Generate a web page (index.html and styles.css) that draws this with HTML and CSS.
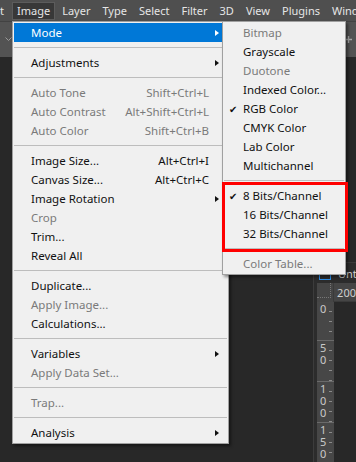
FILE: index.html
```html
<!DOCTYPE html>
<html lang="en">
<head>
<meta charset="UTF-8">
<meta name="viewport" content="width=device-width, initial-scale=1.0">
<title>Image Menu</title>
<link rel="stylesheet" href="styles.css">
</head>
<body>

<div class="app">
    <!-- Menu bar -->
    <div class="menubar">
        <span class="mb-item first">t</span>
        <span class="mb-item active">Image</span>
        <span class="mb-item">Layer</span>
        <span class="mb-item">Type</span>
        <span class="mb-item">Select</span>
        <span class="mb-item">Filter</span>
        <span class="mb-item">3D</span>
        <span class="mb-item">View</span>
        <span class="mb-item">Plugins</span>
        <span class="mb-item">Window</span>
    </div>

    <!-- Options bar -->
    <div class="optbar">
        <svg class="chev" width="7" height="5" viewBox="0 0 7 5"><polyline points="0.5,0.5 3.5,3.5 6.5,0.5" fill="none" stroke="#9a9a9a" stroke-width="1"/></svg>
        <svg class="plus" width="7" height="7" viewBox="0 0 7 7"><path d="M3.5 0v7M0 3.5h7" stroke="#a8a8a8" stroke-width="1.4"/></svg>
    </div>

    <!-- Workspace with document window -->
    <div class="workspace">
        <div class="docwin">
            <div class="doctab">
                <span class="tabicon"></span>
                <span class="tabtext">Untitled</span>
            </div>
            <div class="rulerrow">
                <div class="corner"><div class="corner-dots"></div></div>
                <div class="hruler">200</div>
            </div>
            <div class="docbody">
                <div class="vruler">
                    <div class="seg first"><span>0</span></div>
                    <div class="seg"><span>5</span><span>0</span></div>
                    <div class="seg"><span>1</span><span>0</span><span>0</span></div>
                    <div class="seg"><span>1</span><span>5</span><span>0</span></div>
                </div>
                <div class="canvas"></div>
            </div>
        </div>
    </div>

    <!-- Image menu -->
    <div class="menu main">
        <div class="item hl"><span class="label">Mode</span><span class="arrow"></span></div>
        <div class="sep"></div>
        <div class="item"><span class="label">Adjustments</span><span class="arrow"></span></div>
        <div class="sep"></div>
        <div class="item off"><span class="label">Auto Tone</span><span class="key">Shift+Ctrl+L</span></div>
        <div class="item off"><span class="label">Auto Contrast</span><span class="key">Alt+Shift+Ctrl+L</span></div>
        <div class="item off"><span class="label">Auto Color</span><span class="key">Shift+Ctrl+B</span></div>
        <div class="sep"></div>
        <div class="item"><span class="label">Image Size...</span><span class="key">Alt+Ctrl+I</span></div>
        <div class="item"><span class="label">Canvas Size...</span><span class="key">Alt+Ctrl+C</span></div>
        <div class="item"><span class="label">Image Rotation</span><span class="arrow"></span></div>
        <div class="item off"><span class="label">Crop</span></div>
        <div class="item"><span class="label">Trim...</span></div>
        <div class="item"><span class="label">Reveal All</span></div>
        <div class="sep"></div>
        <div class="item"><span class="label">Duplicate...</span></div>
        <div class="item off"><span class="label">Apply Image...</span></div>
        <div class="item"><span class="label">Calculations...</span></div>
        <div class="sep"></div>
        <div class="item"><span class="label">Variables</span><span class="arrow"></span></div>
        <div class="item off"><span class="label">Apply Data Set...</span></div>
        <div class="sep"></div>
        <div class="item off"><span class="label">Trap...</span></div>
        <div class="sep"></div>
        <div class="item"><span class="label">Analysis</span><span class="arrow"></span></div>
    </div>

    <!-- Mode submenu -->
    <div class="menu sub">
        <div class="item off"><span class="check"></span><span class="label">Bitmap</span></div>
        <div class="item"><span class="check"></span><span class="label">Grayscale</span></div>
        <div class="item off"><span class="check"></span><span class="label">Duotone</span></div>
        <div class="item"><span class="check"></span><span class="label">Indexed Color...</span></div>
        <div class="item"><span class="check">&#10004;</span><span class="label">RGB Color</span></div>
        <div class="item"><span class="check"></span><span class="label">CMYK Color</span></div>
        <div class="item"><span class="check"></span><span class="label">Lab Color</span></div>
        <div class="item"><span class="check"></span><span class="label">Multichannel</span></div>
        <div class="sep"></div>
        <div class="item"><span class="check">&#10004;</span><span class="label">8 Bits/Channel</span></div>
        <div class="item"><span class="check"></span><span class="label">16 Bits/Channel</span></div>
        <div class="item"><span class="check"></span><span class="label">32 Bits/Channel</span></div>
        <div class="sep"></div>
        <div class="item off"><span class="check"></span><span class="label">Color Table...</span></div>
    </div>

    <!-- Red highlight around bit depth -->
    <div class="callout"></div>
</div>

</body>
</html>
```

FILE: styles.css
```css
/* Basic Styles */
body {
    margin: 0;
    padding: 0;
    background-color: #282828;
    font-family: "Noto Sans", "Liberation Sans", sans-serif;
}
.app {
    position: relative;
    width: 356px;
    height: 462px;
    overflow: hidden;
    display: flex;
    flex-direction: column;
}
/* Menu bar */
.menubar {
    height: 21px;
    flex-shrink: 0;
    background-color: #4f4f4f;
    display: flex;
    align-items: center;
    font-size: 11px;
    color: #e6e6e6;
    white-space: nowrap;
}
.mb-item {
    padding: 0 6px;
    line-height: 16px;
}
.mb-item.first {
    padding: 0 8px 0 0;
}
.mb-item.active {
    background-color: #383838;
    border: 1px solid #5c5c5c;
    padding: 0 4px;
    margin-right: 1px;
}
/* Options bar */
.optbar {
    height: 36px;
    flex-shrink: 0;
    box-sizing: border-box;
    background-color: #535353;
    border-top: 1px solid #424242;
    display: flex;
    align-items: center;
    justify-content: space-between;
    padding: 0 4px 0 5px;
}
/* Workspace */
.workspace {
    flex: 1;
    display: flex;
    justify-content: flex-end;
    padding-top: 205px;
}
.docwin {
    width: 43px;
    display: flex;
    flex-direction: column;
    background-color: #2c2c2c;
    border-left: 1px solid #3c3c3c;
    box-sizing: border-box;
}
.doctab {
    height: 21px;
    display: flex;
    align-items: center;
    gap: 3px;
    padding: 0 0 0 5px;
    box-sizing: border-box;
    white-space: nowrap;
    overflow: hidden;
    font-size: 11px;
    color: #d0d0d0;
    border-top: 1px solid #3a3a3a;
}
.tabicon {
    width: 10px;
    height: 6px;
    flex-shrink: 0;
    border: 1.5px solid #2f8fe8;
    border-top: none;
    margin-top: 6px;
}
.tabtext {
    margin-left: 4px;
}
.rulerrow {
    height: 19px;
    display: flex;
    padding-left: 3px;
}
.corner {
    width: 17px;
    background-color: #454545;
    border-right: 1px solid #3a3a3a;
}
.corner-dots {
    width: 13px;
    height: 14px;
    border-right: 1px dotted #777;
    border-bottom: 1px dotted #777;
}
.hruler {
    flex: 1;
    background-color: #454545;
    font-size: 11px;
    line-height: 19px;
    color: #cfcfcf;
    padding-left: 3px;
    border-bottom: 1px solid #3a3a3a;
}
.docbody {
    flex: 1;
    display: flex;
    padding-left: 3px;
}
.vruler {
    width: 17px;
    background-color: #474747;
    display: flex;
    flex-direction: column;
}
.seg {
    height: 41px;
    box-sizing: border-box;
    display: flex;
    flex-direction: column;
    padding: 1px 0 0 3px;
    font-size: 11px;
    line-height: 12px;
    color: #cacaca;
    border-top: 1px solid #6a6a6a;
    background: repeating-linear-gradient(to bottom, transparent 0 9px, #8a8a8a 9px 10px) right 2px top / 3px 100% no-repeat;
}
.seg.first {
    height: 38px;
    border-top: none;
}
.canvas {
    flex: 1;
    background-color: #282828;
}
/* Dropdown menus */
.menu {
    position: absolute;
    top: 21px;
    background-color: #f0f0f0;
    border: 1px solid #a0a0a0;
    padding: 1px;
    font-size: 11.5px;
    box-shadow: 2px 2px 3px rgba(0, 0, 0, 0.45);
}
.menu.main {
    left: 12px;
    width: 213px;
}
.menu.sub {
    left: 222px;
    width: 120px;
}
.item {
    display: flex;
    align-items: center;
    height: 19px;
    padding: 0 8px 0 17px;
    color: #111;
    white-space: nowrap;
}
.item .label {
    flex: 1;
}
.item .key {
    margin-right: 10px;
}
.item .arrow {
    width: 0;
    height: 0;
    border-left: 4px solid #111;
    border-top: 3.5px solid transparent;
    border-bottom: 3.5px solid transparent;
}
.item.hl {
    background-color: #0078d7;
    color: #fff;
}
.item.hl .arrow {
    border-left-color: #fff;
}
.item.off {
    color: #7a7a7a;
}
.sub .item {
    padding: 0 4px 0 5px;
}
.check {
    width: 14px;
    font-size: 10px;
    color: #111;
}
.sep {
    height: 1px;
    margin: 5px 0;
    background-color: #bdbdbd;
}
/* Red annotation */
.callout {
    position: absolute;
    left: 222px;
    top: 182px;
    width: 126px;
    height: 70px;
    box-sizing: border-box;
    border: 3px solid #ff0000;
}
```
